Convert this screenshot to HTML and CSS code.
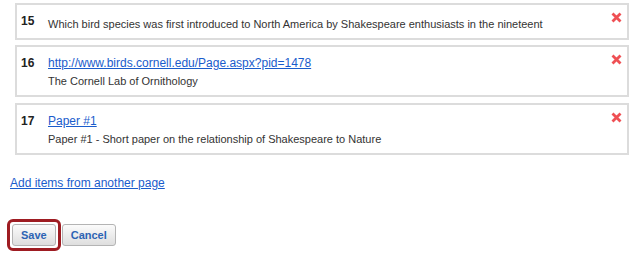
FILE: index.html
```html
<!DOCTYPE html>
<html lang="en">
<head>
  <meta charset="UTF-8">
  <title>Edit items</title>
  <link rel="stylesheet" href="styles.css">
</head>
<body>

  <div class="item-list">
    <!-- 15 -->
    <div class="item">
      <div class="item-num">15</div>
      <div class="item-body">
        <div class="item-desc first">Which bird species was first introduced to North America by Shakespeare enthusiasts in the nineteent</div>
      </div>
      <a class="item-remove" href="#" title="Remove">
        <svg width="11" height="11" viewBox="0 0 11 11"><path d="M1.5 1.5 L9.5 9.5 M9.5 1.5 L1.5 9.5" stroke="#ef5054" stroke-width="2.8"/></svg>
      </a>
    </div>

    <!-- 16 -->
    <div class="item">
      <div class="item-num">16</div>
      <div class="item-body">
        <a class="item-link" href="#">http://www.birds.cornell.edu/Page.aspx?pid=1478</a>
        <div class="item-desc">The Cornell Lab of Ornithology</div>
      </div>
      <a class="item-remove" href="#" title="Remove">
        <svg width="11" height="11" viewBox="0 0 11 11"><path d="M1.5 1.5 L9.5 9.5 M9.5 1.5 L1.5 9.5" stroke="#ef5054" stroke-width="2.8"/></svg>
      </a>
    </div>

    <!-- 17 -->
    <div class="item">
      <div class="item-num">17</div>
      <div class="item-body">
        <a class="item-link" href="#">Paper #1</a>
        <div class="item-desc">Paper #1 - Short paper on the relationship of Shakespeare to Nature</div>
      </div>
      <a class="item-remove" href="#" title="Remove">
        <svg width="11" height="11" viewBox="0 0 11 11"><path d="M1.5 1.5 L9.5 9.5 M9.5 1.5 L1.5 9.5" stroke="#ef5054" stroke-width="2.8"/></svg>
      </a>
    </div>
  </div>

  <div class="add-items">
    <a href="#">Add items from another page</a>
  </div>

  <div class="actions">
    <span class="highlight"><button class="btn">Save</button></span>
    <button class="btn">Cancel</button>
  </div>

</body>
</html>
```

FILE: styles.css
```css
body {
  font-family: "Liberation Sans", Arial, sans-serif;
  margin: 0;
  background-color: #ffffff;
  color: #333;
}

.item-list {
  display: flex;
  flex-direction: column;
  gap: 5px;
  padding: 3px 11px 0 15px;
}

.item {
  display: flex;
  border: 2px solid #dcdcdc;
  padding: 8px 5px 7px 4px;
}

.item:last-child {
  margin-top: 1px;
}

.item-num {
  width: 27px;
  font-size: 12px;
  line-height: 16px;
  font-weight: bold;
  color: #222;
}

.item-body {
  display: flex;
  flex-direction: column;
  flex: 1;
}

.item-link {
  font-size: 12px;
  line-height: 16px;
  color: #1a5ccc;
}

.item-desc {
  font-size: 11px;
  line-height: 14px;
  color: #333;
  margin-top: 3px;
}

.item-desc.first {
  margin-top: 4px;
}

.item-remove {
  margin-top: -4px;
  height: 11px;
}

.add-items {
  padding: 20px 0 0 10px;
  font-size: 12px;
  line-height: 16px;
}

.add-items a {
  color: #1a5ccc;
}

.actions {
  display: flex;
  align-items: center;
  padding: 28px 0 0 7px;
}

.highlight {
  display: inline-block;
  border: 3px solid #9e1c22;
  border-radius: 6px;
  padding: 2px;
}

.btn {
  display: block;
  height: 22px;
  padding: 0 8px;
  font-family: "Liberation Sans", Arial, sans-serif;
  font-size: 11px;
  font-weight: bold;
  color: #2d64b4;
  background: linear-gradient(#fbfbfb, #dedede);
  border: 1px solid #b4b4b4;
  border-radius: 3px;
}

.actions > .btn {
  margin-left: 1px;
}
```
